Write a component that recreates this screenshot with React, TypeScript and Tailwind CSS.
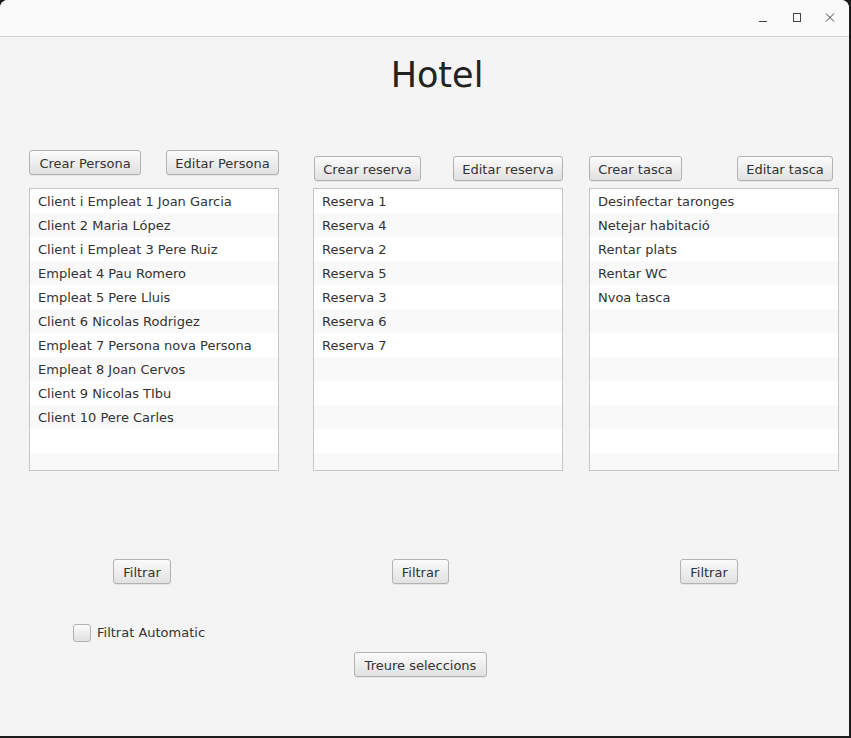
import React from "react";

const btn =
  "h-[25px] pt-[1px] flex items-center justify-center rounded-[3px] border border-[#b2b2b2] bg-gradient-to-b from-[#fbfbfb] to-[#e1e1e1] text-[13px] text-[#333333] shadow-[0_1px_0_rgba(0,0,0,0.06)] leading-none";

function Btn({ label, w }: { label: string; w: string }) {
  return <div className={`${btn} ${w}`}>{label}</div>;
}

function List({ items }: { items: string[] }) {
  const rows = Array.from({ length: 12 }, (_, i) => items[i] ?? "");
  return (
    <div className="w-[250px] h-[283px] border border-[#c6c6c6] bg-white overflow-hidden">
      {rows.map((t, i) => (
        <div
          key={i}
          className={`h-[24px] pt-[1px] leading-[23px] pl-[8px] text-[13px] text-[#333333] whitespace-nowrap ${
            i % 2 === 1 ? "bg-[#f9f9f9]" : "bg-white"
          }`}
        >
          {t}
        </div>
      ))}
    </div>
  );
}

export default function App() {
  return (
    <div
      className="w-[851px] h-[738px] bg-[#1c1c1c] overflow-hidden"
      style={{ fontFamily: '"DejaVu Sans", Verdana, sans-serif' }}
    >
      <div className="w-[849px] h-[736px] bg-[#f4f4f4] rounded-t-[8px] overflow-hidden flex flex-col">
        {/* Title bar */}
        <div className="h-[37px] shrink-0 bg-[#fafafa] border-b border-[#d2d2d2] flex items-center justify-end pr-[13px]">
          <svg width="12" height="12" viewBox="0 0 12 12" className="mr-[22px] mt-[1px]">
            <line x1="2" y1="8.5" x2="10" y2="8.5" stroke="#444" strokeWidth="1" />
          </svg>
          <svg width="12" height="12" viewBox="0 0 12 12" className="mr-[21px]">
            <rect x="2.5" y="1.5" width="7" height="8" fill="none" stroke="#444" strokeWidth="1" />
          </svg>
          <svg width="12" height="12" viewBox="0 0 12 12">
            <path d="M2 1.5 L10 9.5 M10 1.5 L2 9.5" stroke="#444" strokeWidth="1" />
          </svg>
        </div>

        {/* Title */}
        <div className="mt-[18px] h-[40px] leading-[40px] text-[35px] text-[#222222] text-center pl-[25px]">
          Hotel
        </div>

        {/* Columns */}
        <div className="mt-[55px] flex">
          <div className="ml-[29px] flex flex-col w-[250px]">
            <div className="flex justify-between">
              <Btn label="Crear Persona" w="w-[112px]" />
              <Btn label="Editar Persona" w="w-[113px]" />
            </div>
            <div className="mt-[13px]">
              <List
                items={[
                  "Client i Empleat 1 Joan Garcia",
                  "Client 2 Maria López",
                  "Client i Empleat 3 Pere Ruiz",
                  "Empleat 4 Pau Romero",
                  "Empleat 5 Pere Lluis",
                  "Client 6 Nicolas Rodrigez",
                  "Empleat 7 Persona nova Persona",
                  "Empleat 8 Joan Cervos",
                  "Client 9 Nicolas TIbu",
                  "Client 10 Pere Carles",
                ]}
              />
            </div>
          </div>

          <div className="ml-[34px] flex flex-col w-[250px] pt-[6px]">
            <div className="flex justify-between pl-[1px]">
              <Btn label="Crear reserva" w="w-[107px]" />
              <Btn label="Editar reserva" w="w-[110px]" />
            </div>
            <div className="mt-[7px]">
              <List
                items={[
                  "Reserva 1",
                  "Reserva 4",
                  "Reserva 2",
                  "Reserva 5",
                  "Reserva 3",
                  "Reserva 6",
                  "Reserva 7",
                ]}
              />
            </div>
          </div>

          <div className="ml-[26px] flex flex-col w-[250px] pt-[6px]">
            <div className="flex justify-between pr-[6px]">
              <Btn label="Crear tasca" w="w-[93px]" />
              <Btn label="Editar tasca" w="w-[96px]" />
            </div>
            <div className="mt-[7px]">
              <List
                items={[
                  "Desinfectar taronges",
                  "Netejar habitació",
                  "Rentar plats",
                  "Rentar WC",
                  "Nvoa tasca",
                ]}
              />
            </div>
          </div>
        </div>

        {/* Filtrar buttons */}
        <div className="mt-[88px] flex">
          <div className="ml-[113px]">
            <Btn label="Filtrar" w="w-[58px]" />
          </div>
          <div className="ml-[221px]">
            <Btn label="Filtrar" w="w-[57px]" />
          </div>
          <div className="ml-[231px]">
            <Btn label="Filtrar" w="w-[58px]" />
          </div>
        </div>

        {/* Checkbox */}
        <div className="mt-[39px] ml-[73px] flex items-center h-[19px]">
          <div className="w-[18px] h-[18px] rounded-[3px] border border-[#b2b2b2] bg-gradient-to-b from-[#fbfbfb] to-[#e1e1e1]" />
          <span className="ml-[6px] pt-[1px] text-[13px] text-[#333333]">Filtrat Automatic</span>
        </div>

        {/* Treure seleccions */}
        <div className="mt-[10px] ml-[354px]">
          <Btn label="Treure seleccions" w="w-[133px]" />
        </div>
      </div>
    </div>
  );
}
